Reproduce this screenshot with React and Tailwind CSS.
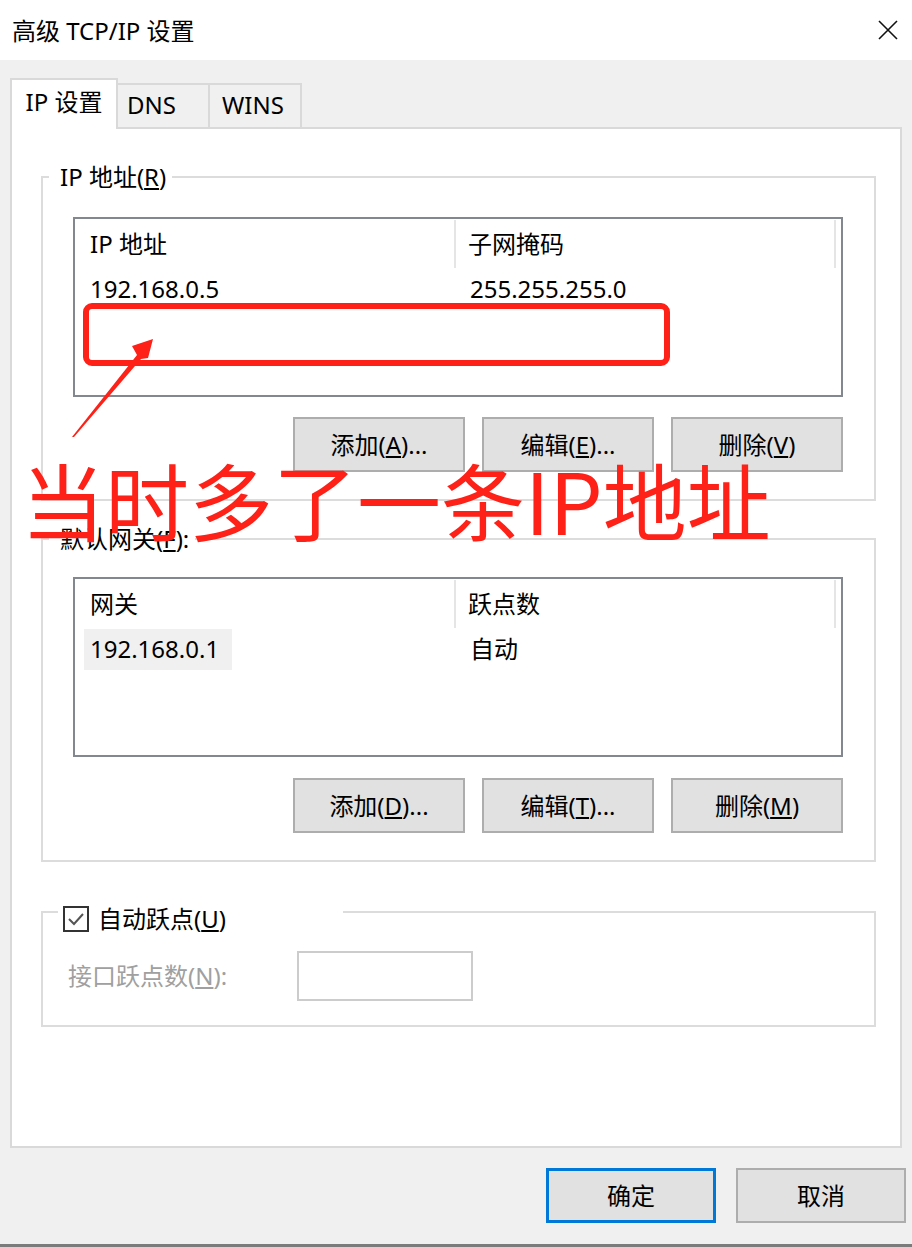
import React from "react";

const font = "font-['Noto_Sans','Noto_Sans_CJK_SC',sans-serif]";

const Btn = ({ children, primary }) => (
  <div
    className={
      "w-[172px] h-[55px] flex items-center justify-center bg-[#e1e1e1] text-[24px] leading-[32px] text-black " +
      (primary ? "border-[3px] border-[#0078d7]" : "border-2 border-[#adadad]")
    }
  >
    {children}
  </div>
);

const ListBox = ({ cols, row, selected }) => (
  <div className="ml-[30px] w-[770px] h-[180px] border-2 border-[#828790] bg-white flex flex-col">
    <div className="flex h-[48px] mt-px">
      <div className="w-[381px] pl-[15px] flex items-center border-r-2 border-[#e5e5e5]">{cols[0]}</div>
      <div className="w-[380px] pl-[12px] flex items-center border-r-2 border-[#e5e5e5]">{cols[1]}</div>
    </div>
    <div className="flex h-[42px] items-center">
      <div className="w-[383px] pl-[9px] flex items-center">
        <span className={"h-[41px] w-[148px] flex items-center px-[6px] " + (selected ? "bg-[#f0f0f0]" : "")}>{row[0]}</span>
      </div>
      <div className="pl-[12px]">{row[1]}</div>
    </div>
  </div>
);

export default function App() {
  return (
    <div className={"relative w-[912px] h-[1247px] overflow-hidden bg-[#f0f0f0] text-[24px] leading-[32px] text-black " + font}>
      {/* title bar */}
      <div className="h-[60px] bg-white flex items-center justify-between pl-[12px] pr-[14px]">
        <span className="pt-[2px]">高级 TCP/IP 设置</span>
        <svg width="20" height="20" viewBox="0 0 20 20">
          <path d="M1 1 L19 19 M19 1 L1 19" stroke="#111" strokeWidth="1.6" fill="none" />
        </svg>
      </div>

      <div className="px-[10px]">
        {/* tabs */}
        <div className="flex items-end h-[67px] pt-[18px]">
          <div className="relative z-10 w-[108px] h-[51px] -mb-[2px] bg-white border-2 border-b-0 border-[#d9d9d9] pt-[6px] text-center">
            IP 设置
          </div>
          <div className="w-[92px] h-[44px] border-t-2 border-r-2 border-[#d9d9d9] pl-[9px] pt-[4px]">DNS</div>
          <div className="w-[92px] h-[44px] border-t-2 border-r-2 border-[#d9d9d9] pl-[12px] pt-[4px]">WINS</div>
        </div>

        {/* panel */}
        <div className="h-[1021px] bg-white border-2 border-[#d9d9d9] pt-[32px]">
          {/* IP address group */}
          <fieldset className="ml-[29px] w-[835px] border-2 border-[#dcdcdc] pb-[27px]">
            <legend className="ml-[6px] pl-[11px] pr-[6px]">
              IP 地址(<u>R</u>)
            </legend>
            <div className="mt-[24px]">
              <ListBox cols={["IP 地址", "子网掩码"]} row={["192.168.0.5", "255.255.255.0"]} />
            </div>
            <div className="mt-[20px] ml-[250px] flex gap-[17px]">
              <Btn>添加(<u>A</u>)...</Btn>
              <Btn>编辑(<u>E</u>)...</Btn>
              <Btn>删除(<u>V</u>)</Btn>
            </div>
          </fieldset>

          {/* gateway group */}
          <fieldset className="mt-[22px] ml-[29px] w-[835px] border-2 border-[#dcdcdc] pb-[27px]">
            <legend className="ml-[6px] pl-[11px] pr-[6px]">
              默认网关(<u>F</u>):
            </legend>
            <div className="mt-[22px]">
              <ListBox cols={["网关", "跃点数"]} row={["192.168.0.1", "自动"]} selected />
            </div>
            <div className="mt-[21px] ml-[250px] flex gap-[17px]">
              <Btn>添加(<u>D</u>)...</Btn>
              <Btn>编辑(<u>T</u>)...</Btn>
              <Btn>删除(<u>M</u>)</Btn>
            </div>
          </fieldset>

          {/* automatic metric group */}
          <fieldset className="mt-[27px] ml-[29px] w-[835px] border-2 border-[#dcdcdc] pb-[24px]">
            <legend className="ml-[15px] w-[285px] h-[46px] pt-[14px] pl-[5px] flex items-center gap-[9px]">
              <span className="w-[26px] h-[26px] border-2 border-[#333] flex items-center justify-center">
                <svg width="18" height="18" viewBox="0 0 18 18">
                  <path d="M2 9 L7 14 L16 4" stroke="#555" strokeWidth="2" fill="none" />
                </svg>
              </span>
              <span>自动跃点(<u>U</u>)</span>
            </legend>
            <div className="mt-[16px] flex items-center">
              <div className="w-[254px] pl-[25px] text-[#a0a0a0]">
                接口跃点数(<u>N</u>):
              </div>
              <div className="w-[176px] h-[50px] border-2 border-[#cccccc] bg-white" />
            </div>
          </fieldset>
        </div>
      </div>

      {/* dialog buttons */}
      <div className="mt-[20px] flex justify-end gap-[20px] pr-[6px]">
        <div className="w-[170px] h-[55px] border-[3px] border-[#0078d7] bg-[#e1e1e1] flex items-center justify-center">确定</div>
        <div className="w-[170px] h-[55px] border-2 border-[#adadad] bg-[#e1e1e1] flex items-center justify-center">取消</div>
      </div>
      <div className="mt-[21px] h-[3px] bg-[#7b7b7b]" />

      {/* red annotation */}
      <div className="absolute left-[83px] top-[303px] w-[587px] h-[63px] border-[6px] border-[#fe2117] rounded-[9px]" />
      <svg className="absolute left-0 top-0" width="912" height="1247" viewBox="0 0 912 1247">
        <polygon points="72,437 137,355 132,346 153,339 148,358 141,359 74,437" fill="#fe2117" />
      </svg>
      <div className="absolute left-[21px] top-[457px] text-[84px] leading-[84px] text-[#fe2117] whitespace-nowrap font-['Noto_Sans_CJK_SC',sans-serif]">
        当时多了一条IP地址
      </div>
    </div>
  );
}
